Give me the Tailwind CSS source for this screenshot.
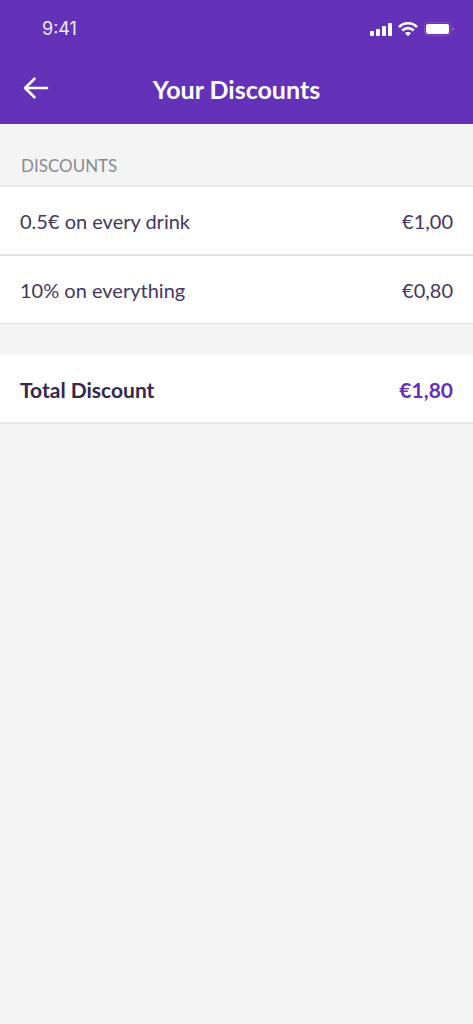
<!DOCTYPE html>
<html lang="en">
<head>
<meta charset="utf-8">
<meta name="viewport" content="width=device-width, initial-scale=1">
<title>Your Discounts</title>
<script src="https://cdn.jsdelivr.net/npm/@tailwindcss/browser@4"></script>
</head>
<body class="min-h-screen bg-[#f4f4f4] font-['Lato',sans-serif] text-[#33284f]">
<header class="bg-[#6432b8] text-white">
  <div class="flex h-14 items-center justify-between pt-0.5 pr-[18px] pl-[42px]">
    <span class="font-['Inter',sans-serif] text-lg leading-6 text-white/90">9:41</span>
    <div class="flex items-center gap-1.5" aria-hidden="true">
      <svg class="h-4 w-[22px]" viewBox="0 0 22 16" fill="currentColor"><rect y="10" width="4" height="5" rx="1"/><rect x="6" y="8" width="4" height="7" rx="1"/><rect x="12" y="5" width="4" height="10" rx="1"/><rect x="18" y="2" width="4" height="13" rx="1"/></svg>
      <svg class="h-4 w-5" viewBox="0 0 20 16" fill="none" stroke="currentColor" stroke-width="2.6"><path d="M1 6.1C6 1 14 1 19 6.1M4.3 9.5c3.3-3.2 8.100-3.2 11.400 0"/><path d="M6.900 12.100c1.800-1.600 4.400-1.600 6.200 0L10 15.300z" fill="currentColor" stroke="none"/></svg>
      <svg class="h-4 w-[31px]" viewBox="0 0 31 16"><rect x=".5" y="1.500" width="26" height="13" rx="3.500" fill="none" stroke="white" stroke-opacity=".15"/><rect x="2" y="3" width="23" height="10" rx="2" fill="white"/><path d="M28.500 6v4c1.600-.6 1.600-3.400 0-4z" fill="white" fill-opacity=".4"/></svg>
    </div>
  </div>
  <div class="grid h-[68px] grid-cols-[48px_1fr_48px] items-center px-3 pb-1">
    <button type="button" aria-label="Back" class="flex size-12 items-center justify-center">
      <svg class="h-6 w-[26px]" viewBox="0 0 26 24" fill="none" stroke="currentColor" stroke-width="2.600" stroke-linecap="round" stroke-linejoin="round"><path d="M24 12H2M11.500 2.700L2 12l9.500 9.300"/></svg>
    </button>
    <h1 class="pt-px text-center text-[25px] leading-8 font-bold">Your Discounts</h1>
  </div>
</header>
<main>
  <section>
    <h2 class="px-[21px] pt-[30px] pb-[7px] text-[17px] leading-6 text-[#8b8b8d]">DISCOUNTS</h2>
    <dl class="border-t-2 border-b border-t-[#e7e7e7] border-b-[#dedede] bg-white text-xl text-[#43385f]">
      <div class="flex h-[69px] items-center justify-between border-b-2 border-[#e2e2e2] px-5"><dt>0.5€ on every drink</dt><dd>€1,00</dd></div>
      <div class="flex h-[67px] items-center justify-between px-5"><dt>10% on everything</dt><dd>€0,80</dd></div>
    </dl>
  </section>
  <dl class="mt-[30px] flex h-[70px] items-center justify-between border-b-2 border-[#e7e7e7] bg-white px-5 pt-1 text-[21px] font-bold">
    <dt>Total Discount</dt><dd class="text-[#6432b8]">€1,80</dd>
  </dl>
</main>
</body>
</html>
